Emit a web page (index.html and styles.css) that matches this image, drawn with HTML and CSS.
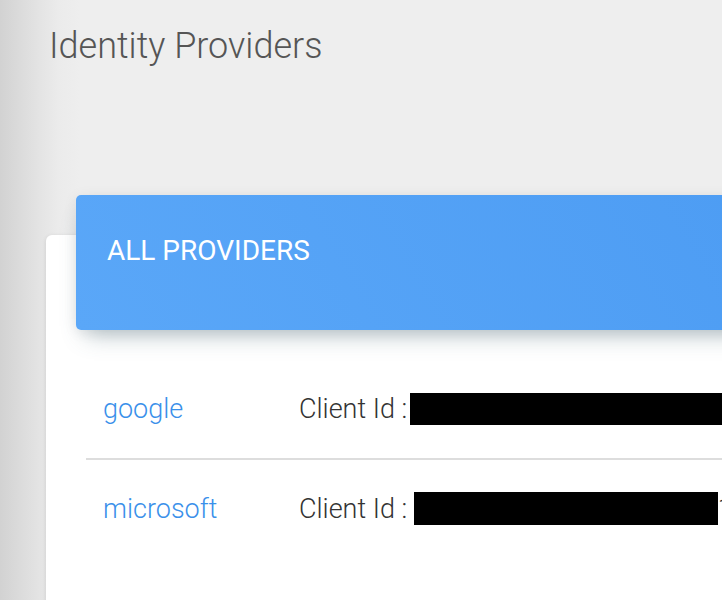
FILE: index.html
```html
<!DOCTYPE html>
<html lang="en">

<head>
    <meta charset="utf-8" />
    <title>Identity Providers</title>

    <link rel="stylesheet" href="styles.css">
</head>

<body>
    <div class="main">
        <h3 class="page-title">Identity Providers</h3>

        <div class="card">
            <div class="card-header">
                <h4>ALL PROVIDERS</h4>
            </div>
            <div class="card-body">
                <div class="provider">
                    <a href="#" class="name">google</a>
                    <div class="client">Client Id :<span class="redact wide"></span></div>
                </div>
                <div class="provider">
                    <a href="#" class="name">microsoft</a>
                    <div class="client">Client Id : <span class="redact"></span>1</div>
                </div>
            </div>
        </div>
    </div>
</body>

</html>
```

FILE: styles.css
```css
html,
body {
    margin: 0;
    height: 100%;
    overflow: hidden;
}

body {
    font-family: Roboto, "Liberation Sans", sans-serif;
    background: #eeeeee;
}

.main {
    height: 100%;
    background: linear-gradient(to right, #d2d2d2 0, #e4e4e4 40px, #ebebeb 58px, #eeeeee 80px);
    padding: 1px 0 0 46px;
    box-sizing: border-box;
}

.page-title {
    font-weight: 300;
    font-size: 36px;
    color: #555;
    margin: 24px 0 0 3px;
    line-height: 42px;
}

.card {
    width: 900px;
    margin-top: 168px;
    background: #fff;
    border-radius: 6px;
    box-shadow: 0 1px 4px rgba(0, 0, 0, 0.12);
}

.card-header {
    position: relative;
    top: -40px;
    margin: 0 0 -40px 30px;
    height: 135px;
    box-sizing: border-box;
    padding: 39px 31px;
    border-radius: 5px;
    background: linear-gradient(60deg, #5aa7f8, #4a9af2);
    box-shadow: 0 14px 22px -10px rgba(80, 110, 125, 0.45), 0 2px 14px rgba(0, 0, 0, 0.08);
}

.card-header h4 {
    margin: 0;
    color: #fff;
    font-weight: 400;
    font-size: 28px;
    line-height: 34px;
}

.card-body {
    padding: 30px 0 80px 40px;
}

.provider {
    display: grid;
    grid-template-columns: 196px 1fr;
    align-items: center;
    height: 98px;
    padding-left: 17px;
    font-size: 27px;
    font-weight: 300;
}

.provider + .provider {
    border-top: 2px solid #dddddd;
}

.name {
    color: #3a90ea;
    text-decoration: none;
}

.client {
    color: #333;
    white-space: nowrap;
}

.redact {
    display: inline-block;
    vertical-align: middle;
    background: #000;
    width: 304px;
    height: 33px;
    margin-top: -4px;
}

.redact.wide {
    width: 420px;
    height: 32px;
    margin-left: 3px;
}
```
